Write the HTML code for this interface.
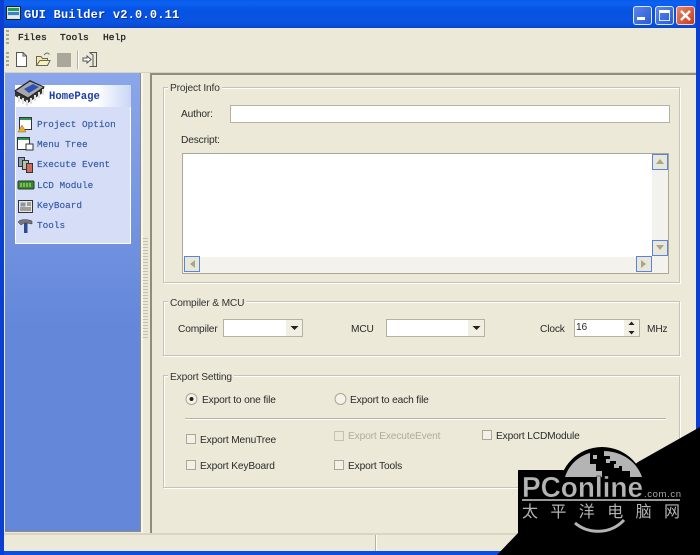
<!DOCTYPE html>
<html><head><meta charset="utf-8">
<style>
html,body{margin:0;padding:0;background:#ece9d8}
#w{position:relative;width:700px;height:555px;overflow:hidden;background:#ece9d8;font-family:"Liberation Sans","Noto Sans CJK SC",sans-serif;font-size:10.2px;letter-spacing:-.15px;color:#2a2a2a}
#w div,#w span{position:absolute;white-space:nowrap;box-sizing:border-box}
.mono{font-family:"Liberation Mono",monospace;letter-spacing:0}
.menu{font-family:"Liberation Mono",monospace;font-size:9.6px;letter-spacing:0;top:32px;color:#222;-webkit-text-stroke:.3px #222}
.gb{border:1px solid #c6c3b2;box-shadow:inset 1px 1px 0 #fff,1px 1px 0 #fff}
.lg{background:#ece9d8;padding:0 2px;height:13px;line-height:13px;color:#333}
.in{background:#fff;border:1px solid #b5b2a1}
.cb{width:10px;height:10px;border:1px solid #a9a796;background:#f3f1e7}
.sb{width:16px;height:16px;border:1px solid #5a84d8;background:#e9e7d8}
.t{line-height:13px;height:13px;margin-top:2px}
.nav{color:#3559a8;font-size:9.4px;letter-spacing:0;left:37px;font-family:"Liberation Mono",monospace;-webkit-text-stroke:.15px #3559a8;margin-top:0}
</style></head><body>
<div id="w">
<!-- window frame -->
<div style="left:0;top:0;width:700px;height:555px;background:#0a4fe0"></div>
<div style="left:0;top:0;width:700px;height:28px;background:linear-gradient(#0a5be8 0,#0d62f2 3px,#0553e3 10px,#0a53e0 22px,#0646cf 28px)"></div>
<div style="left:0;top:0;width:4px;height:555px;background:#0a3fd2"></div>
<div style="left:696px;top:0;width:4px;height:555px;background:#0a3fd2"></div>
<div style="left:4px;top:28px;width:692px;height:523px;background:#ece9d8"></div>
<!-- app icon -->
<svg style="position:absolute;left:6px;top:6px" width="16" height="15"><rect x=".5" y=".5" width="14" height="13" fill="#cfe3d8" stroke="#222"/><rect x="2" y="2" width="11" height="3" fill="#1f9a5a"/><rect x="2" y="6" width="11" height="3" fill="#3c7fd0"/><rect x="2" y="10" width="11" height="2" fill="#e8e8e8"/></svg>
<div class="mono" style="left:24px;top:8px;font-size:12px;font-weight:bold;letter-spacing:.2px;color:#fff;text-shadow:1px 1px 0 #0a2fa0;line-height:14px">GUI Builder v2.0.0.11</div>
<!-- window buttons -->
<div style="left:633px;top:6px;width:19px;height:19px;border:1px solid #dfe8fb;border-radius:3px;background:linear-gradient(135deg,#5c86ea,#2a5ad8)"></div>
<div style="left:637px;top:17px;width:8px;height:3px;background:#fff"></div>
<div style="left:655px;top:6px;width:19px;height:19px;border:1px solid #dfe8fb;border-radius:3px;background:linear-gradient(135deg,#5c86ea,#2a5ad8)"></div>
<div style="left:659px;top:10px;width:11px;height:11px;border:1px solid #dfe8fb;border-top:3px solid #fff"></div>
<div style="left:676px;top:6px;width:19px;height:19px;border:1px solid #f3d8d0;border-radius:3px;background:linear-gradient(135deg,#e8866a,#c8391a)"></div>
<svg style="position:absolute;left:676px;top:6px" width="19" height="19"><path d="M5 5L14 14M14 5L5 14" stroke="#fff" stroke-width="2.4"/></svg>
<!-- menu -->
<div style="left:6px;top:30px;width:3px;height:16px;background:repeating-linear-gradient(#a8a595 0 2px,#ece9d8 2px 4px)"></div>
<div class="menu" style="left:18px">Files</div>
<div class="menu" style="left:60px">Tools</div>
<div class="menu" style="left:103px">Help</div>
<div style="left:6px;top:52px;width:3px;height:16px;background:repeating-linear-gradient(#a8a595 0 2px,#ece9d8 2px 4px)"></div>
<svg style="position:absolute;left:14px;top:50px" width="90" height="20" fill="none">
<path d="M2.500 2.500H9L12.500 6V16.500H2.500Z" fill="#fff" stroke="#555"/><path d="M9 2.500V6H12.500" stroke="#555"/>
<path d="M22.500 15.500V6.500H27L28.500 8.500H33.500V15.500Z" fill="#f6e9a0" stroke="#666"/><path d="M22.500 15.500L26 10.500H36L33.500 15.500Z" fill="#fbf2b8" stroke="#666"/><path d="M30 5C32 2.500 34 2.500 35.500 4.500" stroke="#666"/>
<rect x="43" y="3" width="14" height="14" fill="#a9a79a"/>
<path d="M63.500 .5V19" stroke="#b3b09e"/><path d="M64.500 .5V19" stroke="#fff"/>
<path d="M75.500 2.500H82.500V16.500H75.500" stroke="#555"/><path d="M75.500 2.500L79 5V17" stroke="#555"/><path d="M69 8H73V6L77 9.500L73 13V11H69Z" fill="#fff" stroke="#555"/>
</svg>
<div style="left:4px;top:72px;width:692px;height:1px;background:#d6d3c2"></div>
<!-- left panel -->
<div style="left:5px;top:73px;width:136px;height:459px;background:linear-gradient(#8ba6ea,#6487da 55%,#6587da);border-right:1px solid #8f8d80;border-bottom:1px solid #8f8d80"></div>
<div style="left:141px;top:73px;width:2px;height:460px;background:#f6f5ee"></div>
<div style="left:15px;top:85px;width:116px;height:23px;background:linear-gradient(90deg,#fff 70%,#c9d6f5)"></div>
<div style="left:15px;top:107px;width:116px;height:137px;background:#d5def6;border:1px solid #fff;border-top:none"></div>
<svg style="position:absolute;left:13px;top:79px" width="34" height="28">
<path d="M2 11L17 1L31 8V13L15 24L2 17Z" fill="#333"/>
<path d="M6 17V23M10 19V25M14 21V27M18 19V25M22 16V22M26 13V19M30 10V16" stroke="#e0e0e0" stroke-width="2"/>
<path d="M2 12L17 2L31 8L15 19Z" fill="#a8a8a8" stroke="#222"/><path d="M11 10L20 5L26 8L16 14Z" fill="#2c52b8"/>
</svg>
<div class="mono" style="left:49px;top:91px;font-size:10.6px;font-weight:bold;color:#1d3fa8;line-height:12px">HomePage</div>
<svg style="position:absolute;left:17px;top:116px" width="18" height="118">
<rect x="2.500" y="1.500" width="12" height="12" fill="#fff" stroke="#333"/><rect x="3" y="2" width="11" height="2" fill="#2a9a5a"/><path d="M1 16L5 9L9 16Z" fill="#e8b030" stroke="#8a6a10" stroke-width=".5"/>
<rect x=".5" y="21.500" width="12" height="12" fill="#fff" stroke="#333"/><rect x="1" y="22" width="11" height="2" fill="#2a9a5a"/><rect x="9" y="28" width="7" height="6" fill="#fff" stroke="#333"/>
<rect x="1.500" y="41.500" width="6" height="9" fill="#8aa0b8" stroke="#333"/><rect x="5.500" y="44.500" width="6" height="9" fill="#b0c4a8" stroke="#333"/><rect x="9.500" y="47.500" width="6" height="9" fill="#d06a5a" stroke="#333"/>
<rect x="1" y="65" width="16" height="8" rx="1" fill="#2e8b2e" stroke="#333"/><path d="M4 67V71M7 67V71M10 67V71M13 67V71" stroke="#d9e36a"/>
<rect x="1.500" y="84.500" width="14" height="12" fill="#e8e8e0" stroke="#333"/><rect x="3.500" y="86.500" width="5" height="4" fill="#8a93a8"/><path d="M10 87H14M10 89H14M3 92H14M3 94H14" stroke="#555"/>
<path d="M1 106C3 103 10 103 15 105V108L10 107H7L4 109Z" fill="#777" stroke="#333" stroke-width=".5"/><rect x="7" y="107" width="3.500" height="10" fill="#2a4f90"/>
</svg>
<div class="nav t" style="top:118px">Project Option</div>
<div class="nav t" style="top:138px">Menu Tree</div>
<div class="nav t" style="top:158px">Execute Event</div>
<div class="nav t" style="top:179px">LCD Module</div>
<div class="nav t" style="top:199px">KeyBoard</div>
<div class="nav t" style="top:219px">Tools</div>
<!-- splitter -->
<div style="left:143px;top:238px;width:5px;height:100px;background:repeating-linear-gradient(#c4c1b0 0 1px,#ece9d8 1px 3px)"></div>
<!-- right frame -->
<div style="left:150px;top:73px;width:546px;height:460px;border-left:2px solid #8f8d7c;border-top:2px solid #8f8d7c"></div>
<!-- Project info -->
<div class="gb" style="left:163px;top:87px;width:517px;height:196px"></div>
<div class="lg t" style="left:168px;top:80px">Project Info</div>
<div class="t" style="left:181px;top:106px">Author:</div>
<div class="in" style="left:230px;top:105px;width:440px;height:18px"></div>
<div class="t" style="left:181px;top:132px">Descript:</div>
<div class="in" style="left:182px;top:153px;width:487px;height:121px;border-color:#aaa896"></div>
<div style="left:652px;top:154px;width:16px;height:119px;background:#f3f2ec"></div>
<div style="left:183px;top:257px;width:469px;height:16px;background:#f3f2ec"></div>
<div class="sb" style="left:652px;top:154px"></div>
<div class="sb" style="left:652px;top:240px"></div>
<div class="sb" style="left:636px;top:256px"></div>
<div class="sb" style="left:184px;top:256px"></div>
<svg style="position:absolute;left:0;top:0" width="700" height="300">
<path d="M656 164H664L660 159Z" fill="#a8a58c"/><path d="M656 245H664L660 250Z" fill="#a8a58c"/><path d="M641 260V268L646 264Z" fill="#a8a58c"/><path d="M195 260V268L190 264Z" fill="#a8a58c"/>
</svg>
<!-- Compiler -->
<div class="gb" style="left:163px;top:301px;width:517px;height:55px"></div>
<div class="lg t" style="left:168px;top:295px">Compiler &amp; MCU</div>
<div class="t" style="left:178px;top:321px">Compiler</div>
<div class="in" style="left:223px;top:319px;width:80px;height:18px"></div>
<div class="t" style="left:351px;top:321px">MCU</div>
<div class="in" style="left:386px;top:319px;width:99px;height:18px"></div>
<div style="left:286px;top:320px;width:16px;height:16px;background:#f1efe4"></div>
<div style="left:468px;top:320px;width:16px;height:16px;background:#f1efe4"></div>
<svg style="position:absolute;left:0;top:300px" width="700" height="40">
<path d="M290.500 26H298.500L294.500 30Z" fill="#222"/><path d="M472.500 26H480.500L476.500 30Z" fill="#222"/>
</svg>
<div class="t" style="left:540px;top:321px">Clock</div>
<div class="in" style="left:574px;top:319px;width:66px;height:18px"></div>
<div class="t" style="left:576px;top:319px">16</div>
<div style="left:624px;top:320px;width:15px;height:16px;background:#f1efe4"></div>
<svg style="position:absolute;left:0;top:300px" width="700" height="40"><path d="M628.500 25L631.500 21.500L634.500 25Z" fill="#222"/><path d="M628.500 31L631.500 34.500L634.500 31Z" fill="#222"/></svg>
<div class="t" style="left:647px;top:321px">MHz</div>
<!-- Export -->
<div class="gb" style="left:163px;top:375px;width:517px;height:113px"></div>
<div class="lg t" style="left:168px;top:369px">Export Setting</div>
<svg style="position:absolute;left:185px;top:393px" width="170" height="14"><circle cx="6.500" cy="6" r="5.500" fill="#f4f2e9" stroke="#a9a796"/><circle cx="6.500" cy="6" r="2" fill="#222"/><circle cx="155.500" cy="6" r="5.500" fill="#f4f2e9" stroke="#a9a796"/></svg>
<div class="t" style="left:202px;top:392px">Export to one file</div>
<div class="t" style="left:350px;top:392px">Export to each file</div>
<div style="left:185px;top:418px;width:481px;height:1px;background:#b5b2a1;box-shadow:0 1px 0 #fff"></div>
<div class="cb" style="left:186px;top:434px"></div>
<div class="t" style="left:200px;top:432px">Export MenuTree</div>
<div class="cb" style="left:334px;top:431px;border-color:#c4c2b3;background:#ece9d8"></div>
<div class="t" style="left:348px;top:428px;color:#aeac9d">Export ExecuteEvent</div>
<div class="cb" style="left:482px;top:430px"></div>
<div class="t" style="left:496px;top:428px">Export LCDModule</div>
<div class="cb" style="left:186px;top:460px"></div>
<div class="t" style="left:200px;top:458px">Export KeyBoard</div>
<div class="cb" style="left:334px;top:460px"></div>
<div class="t" style="left:348px;top:458px">Export Tools</div>
<!-- status bar -->
<div style="left:4px;top:533px;width:692px;height:18px;background:#ece9d8;border-top:2px solid #d8d5c2"></div>
<div style="left:375px;top:535px;width:1px;height:16px;background:#b5b2a1"></div>
<div style="left:376px;top:535px;width:1px;height:16px;background:#fff"></div>
<!-- watermark -->
<svg style="position:absolute;left:0;top:0" width="700" height="555" letter-spacing="0">
<path d="M700 427L638 462L602 490L563 470H518V533L497 555H700Z" fill="#000"/>
<circle cx="602" cy="490" r="43" fill="#000"/>
<path d="M565 477C570 461 585 451 603 451C622 451 637 462 642 477Z" fill="#b4b4b4"/>
<path d="M590 451H604V456H610V461H616V466H622V471H630V477H602V471H596V464H590Z" fill="#000"/>
<path d="M606 459h4v4h-4zM614 464h5v4h-5zM593 455h4v4h-4z" fill="#b4b4b4"/>
<rect x="522" y="499" width="158" height="2" fill="#999"/>
<path d="M575 523C588 534 610 535 624 520" stroke="#b4b4b4" stroke-width="3" fill="none"/>
<text x="522" y="497" font-family="Liberation Sans" font-weight="bold" font-size="29" fill="#b4b4b4" stroke="#000" stroke-width=".4" textLength="121" lengthAdjust="spacingAndGlyphs">PConline</text>
<text x="644" y="497" font-family="Liberation Sans" font-size="9.500" fill="#aaa" textLength="37" lengthAdjust="spacing">.com.cn</text>
<text x="522" y="517" font-family="Noto Sans CJK SC" font-size="16" fill="#b4b4b4" textLength="158" lengthAdjust="spacing">太平洋电脑网</text>
</svg>
</div>
</body></html>
